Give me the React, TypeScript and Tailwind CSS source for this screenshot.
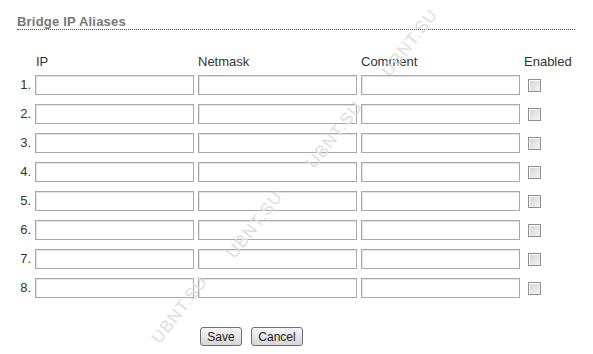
import React from "react";

const rows = [1, 2, 3, 4, 5, 6, 7, 8];

function Field() {
  return (
    <input
      type="text"
      className="block w-[159px] h-[20px] border border-[#a9a9a9] bg-white shadow-[inset_1px_1px_0_#e4e4e4] outline-none"
    />
  );
}

function Check() {
  return (
    <div className="w-[13px] h-[13px] border border-[#8f8f8f] bg-gradient-to-br from-[#d4d4d4] to-[#f4f4f4] shadow-[inset_1px_1px_0_#fff]" />
  );
}

function Mark({ className }: { className: string }) {
  return (
    <div
      aria-hidden="true"
      className={
        "absolute pointer-events-none select-none text-[17px] tracking-[1px] text-[#dedede] -rotate-[52deg] " +
        className
      }
      style={{ fontFamily: '"Liberation Sans", Arial, sans-serif' }}
    >
      UBNT.SU
    </div>
  );
}

export default function App() {
  return (
    <div
      className="relative w-[593px] h-[354px] bg-white overflow-hidden text-[13px] text-[#333]"
      style={{ fontFamily: '"Liberation Sans", Arial, sans-serif' }}
    >
      <div className="pl-[17px] pr-[18px] pt-[14px]">
        <div className="text-[13px] tracking-[0.2px] font-bold text-[#777] leading-[15px] border-b border-dotted border-[#555]">
          Bridge IP Aliases
        </div>
      </div>

      <div className="pl-[17px] pt-[24px]">
        <div className="grid grid-cols-[14px_159px_159px_159px_60px] gap-x-[4px]">
          <div />
          <div className="pl-[1px] leading-[15px] h-[18px]">IP</div>
          <div className="leading-[15px]">Netmask</div>
          <div className="leading-[15px]">Comment</div>
          <div className="leading-[15px]">Enabled</div>
        </div>
        <div className="mt-[3px] flex flex-col gap-[9px]">
          {rows.map((n) => (
            <div
              key={n}
              className="grid grid-cols-[14px_159px_159px_159px_60px] gap-x-[4px] items-center"
            >
              <div className="text-right">{n}.</div>
              <Field />
              <Field />
              <Field />
              <div className="pl-[4px]">
                <Check />
              </div>
            </div>
          ))}
        </div>
        <div className="flex gap-[9px] pl-[183px] mt-[29px]">
          <button className="h-[19px] w-[42px] border border-[#707070] rounded-[3px] bg-gradient-to-b from-[#f6f6f6] to-[#d6d6d6] text-[12px] text-[#222] leading-[16px]">
            Save
          </button>
          <button className="h-[19px] w-[52px] border border-[#707070] rounded-[3px] bg-gradient-to-b from-[#f6f6f6] to-[#d6d6d6] text-[12px] text-[#222] leading-[16px]">
            Cancel
          </button>
        </div>
      </div>

      <Mark className="left-[370px] top-[30px]" />
      <Mark className="left-[295px] top-[122px]" />
      <Mark className="left-[215px] top-[212px]" />
      <Mark className="left-[140px] top-[297px]" />
    </div>
  );
}
